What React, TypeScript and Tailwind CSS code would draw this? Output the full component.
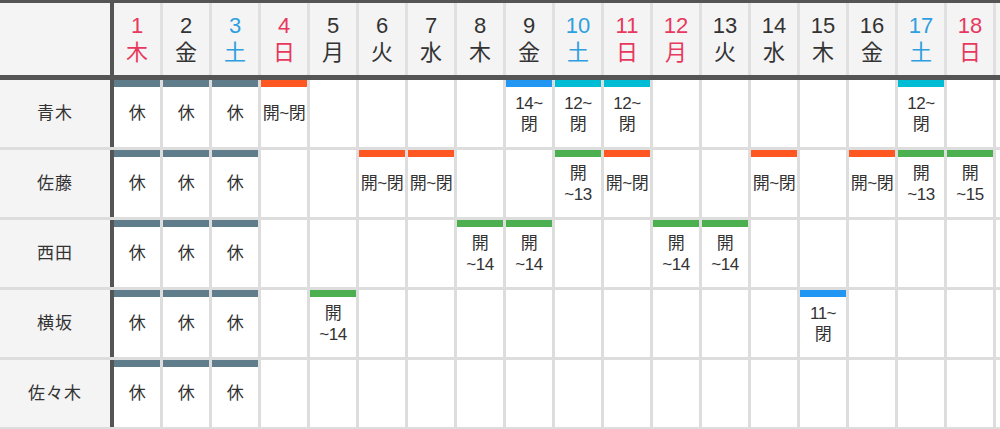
import React from "react";

type Shift = { text: string; bar: string };

const OFF: Shift = { text: "休", bar: "bg-[#607d8b]" };
const FULL: Shift = { text: "開~閉", bar: "bg-[#ff5722]" };
const early = (h: number): Shift => ({ text: `開\n~${h}`, bar: "bg-[#4caf50]" });
const late = (h: number, bar: string): Shift => ({ text: `${h}~\n閉`, bar });

const WEEK = ["日", "月", "火", "水", "木", "金", "土"];
const HOLIDAYS = [1, 12];

const DAYS = Array.from({ length: 31 }, (_, i) => i + 1);

const STAFF: { name: string; shifts: Record<number, Shift> }[] = [
  {
    name: "青木",
    shifts: {
      1: OFF, 2: OFF, 3: OFF, 4: FULL,
      9: late(14, "bg-[#2196f3]"),
      10: late(12, "bg-[#00bcd4]"),
      11: late(12, "bg-[#00bcd4]"),
      17: late(12, "bg-[#00bcd4]"),
    },
  },
  {
    name: "佐藤",
    shifts: {
      1: OFF, 2: OFF, 3: OFF, 6: FULL, 7: FULL,
      10: early(13), 11: FULL, 14: FULL, 16: FULL,
      17: early(13), 18: early(15),
    },
  },
  {
    name: "西田",
    shifts: {
      1: OFF, 2: OFF, 3: OFF,
      8: early(14), 9: early(14), 12: early(14), 13: early(14),
    },
  },
  {
    name: "横坂",
    shifts: {
      1: OFF, 2: OFF, 3: OFF, 5: early(14),
      15: late(11, "bg-[#2196f3]"),
    },
  },
  {
    name: "佐々木",
    shifts: { 1: OFF, 2: OFF, 3: OFF },
  },
];

function dayColor(d: number) {
  const w = (d + 3) % 7;
  if (w === 0 || HOLIDAYS.includes(d)) return "text-[#e8385e]";
  if (w === 6) return "text-[#2f9fdf]";
  return "text-[#333]";
}

export default function App() {
  return (
    <div className="w-[1000px] h-[429px] overflow-hidden bg-white text-[#333] font-['Liberation_Sans','Noto_Sans_CJK_JP',sans-serif]">
      {/* header */}
      <div className="flex h-[80px] border-t-[3px] border-b-[5px] border-[#555] w-max">
        <div className="w-[114px] shrink-0 bg-[#f4f4f4] border-r-4 border-[#555]" />
        {DAYS.map((d) => (
          <div
            key={d}
            className={`w-[49px] shrink-0 bg-[#f4f4f4] border-r-[3px] border-[#e0e0e0] flex flex-col items-center justify-center text-[22px] leading-[27px] ${dayColor(d)}`}
          >
            <span>{d}</span>
            <span>{WEEK[(d + 3) % 7]}</span>
          </div>
        ))}
      </div>

      {STAFF.map((s) => (
        <div key={s.name} className="flex h-[70px] w-max border-b-[3px] border-[#dddddd]">
          <div className="w-[114px] shrink-0 bg-[#f4f4f4] border-r-4 border-[#555] flex items-center justify-center text-[17px] tracking-[1px]">
            {s.name}
          </div>
          {DAYS.map((d) => {
            const sh = s.shifts[d];
            return (
              <div
                key={d}
                className="relative w-[49px] shrink-0 border-r-[3px] border-[#dddddd] flex items-center justify-center"
              >
                {sh && (
                  <>
                    <div className={`absolute left-0 right-0 top-0 h-[7px] ${sh.bar}`} />
                    <span className="whitespace-pre-line text-center text-[17px] leading-[21px] tracking-[-0.5px]">
                      {sh.text}
                    </span>
                  </>
                )}
              </div>
            );
          })}
        </div>
      ))}
    </div>
  );
}
